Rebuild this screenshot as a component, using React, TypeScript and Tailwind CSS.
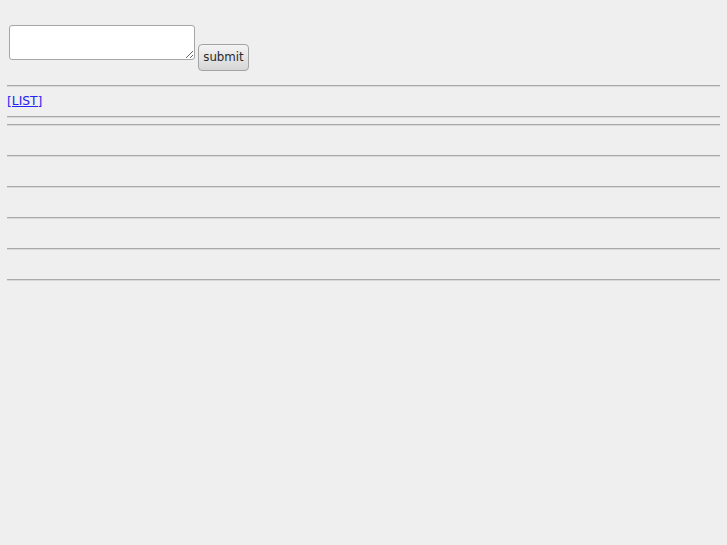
export default function App() {
  const rules = [0, 1, 2, 3, 4];

  return (
    <div
      className="min-h-[545px] bg-[#efefef] px-[7px] pt-[25px] text-[12px] text-[#222]"
      style={{ fontFamily: '"DejaVu Sans", Verdana, sans-serif' }}
    >
      <form className="flex items-start" onSubmit={(e) => e.preventDefault()}>
        <textarea className="ml-[2px] block h-[35px] w-[186px] rounded-[3px] border border-[#a6a6a6] bg-white p-[2px] outline-none" />
        <button
          type="submit"
          className="ml-[3px] mt-[19px] h-[27px] w-[51px] rounded-[4px] border border-[#a3a3a3] bg-gradient-to-b from-[#f4f4f4] to-[#d6d6d6] pt-[1px] text-[11.8px] leading-none text-[#2a2a2a]"
        >
          submit
        </button>
      </form>

      <hr className="mt-[14px] h-[2px] border-0 border-t border-b border-t-[#a9a9a9] border-b-[#d9d9d9]" />
      <div className="mt-[7px] h-[14px] leading-[14px]">
        <a href="#" className="text-[12.3px] text-[#2424f5] underline">
          [LIST]
        </a>
      </div>
      <hr className="mt-[8px] h-[2px] border-0 border-t border-b border-t-[#a9a9a9] border-b-[#d9d9d9]" />

      {rules.map((i) => (
        <hr
          key={i}
          className={`${i === 0 ? 'mt-[6px]' : 'mt-[29px]'} h-[2px] border-0 border-t border-b border-t-[#a9a9a9] border-b-[#d9d9d9]`}
        />
      ))}
      <hr className="mt-[29px] h-[2px] border-0 border-t border-b border-t-[#a9a9a9] border-b-[#d9d9d9]" />
    </div>
  );
}
